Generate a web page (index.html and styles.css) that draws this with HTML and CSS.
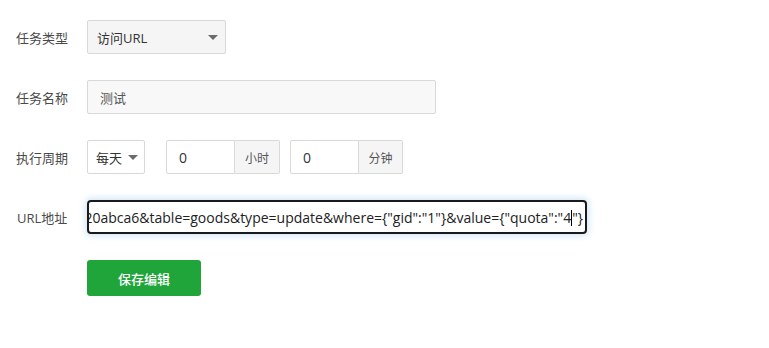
FILE: index.html
```html
<!DOCTYPE html>
<html lang="zh-CN">
<head>
<meta charset="utf-8">
<title>任务编辑</title>
<link rel="stylesheet" href="styles.css">
</head>
<body>
<form class="form">
  <div class="row">
    <label class="label">任务类型</label>
    <div class="select select-type"><span>访问URL</span><i class="caret"></i></div>
  </div>
  <div class="row">
    <label class="label">任务名称</label>
    <div class="input input-name">测试</div>
  </div>
  <div class="row">
    <label class="label">执行周期</label>
    <div class="select select-cycle"><span>每天</span><i class="caret"></i></div>
    <div class="group group-hour">
      <div class="input input-num">0</div>
      <div class="addon">小时</div>
    </div>
    <div class="group group-min">
      <div class="input input-num">0</div>
      <div class="addon">分钟</div>
    </div>
  </div>
  <div class="row">
    <label class="label label-url">URL地址</label>
    <div class="input input-url"><span class="url-text">20abca6&amp;table=goods&amp;type=update&amp;where={"gid":"1"}&amp;value={"quota":"4<span class="cursor"></span>"}</span></div>
  </div>
  <div class="row row-btn">
    <button type="button" class="btn">保存编辑</button>
  </div>
</form>
</body>
</html>
```
FILE: styles.css
```css
html, body {
  margin: 0;
  padding: 0;
  background: #ffffff;
}
body {
  font-family: "Open Sans", "Noto Sans CJK SC", sans-serif;
  font-size: 13px;
  color: #333333;
}
.form {
  padding: 20px 0 0 0;
}
.row {
  display: flex;
  align-items: center;
  height: 34px;
  margin-bottom: 26px;
}
.row-btn {
  height: 36px;
}
.label {
  width: 71px;
  padding-left: 16px;
  color: #4a4a4a;
  font-family: "Noto Sans CJK SC", sans-serif;
  font-size: 13px;
}
.label-url {
  padding-left: 17px;
  width: 70px;
  font-family: "Open Sans", "Noto Sans CJK SC", sans-serif;
}
.select {
  box-sizing: border-box;
  height: 34px;
  border: 1px solid #d9d9d9;
  border-radius: 2px;
  display: flex;
  align-items: center;
  justify-content: space-between;
  font-family: "Open Sans", "Noto Sans CJK SC", sans-serif;
  font-size: 13px;
  color: #333;
}
.select-type {
  width: 139px;
  background: #f5f5f5;
  padding: 0 6px 0 9px;
}
.select-cycle {
  width: 58px;
  background: #ffffff;
  padding: 0 5px 0 8px;
  margin-right: 21px;
}
.caret {
  width: 0;
  height: 0;
  border-left: 5px solid transparent;
  border-right: 5px solid transparent;
  border-top: 5px solid #6b6b6b;
  margin-right: 1px;
}
.input {
  box-sizing: border-box;
  height: 34px;
  border: 1px solid #d9d9d9;
  border-radius: 2px;
  display: flex;
  align-items: center;
  font-size: 13px;
  color: #333;
}
.input-name {
  width: 349px;
  background: #f8f8f8;
  padding-left: 12px;
  font-family: "Noto Sans CJK SC", sans-serif;
  color: #555;
}
.group {
  display: flex;
  margin-right: 10px;
}
.input-num {
  width: 69px;
  padding-left: 12px;
  border-radius: 2px 0 0 2px;
  font-size: 14px;
}
.addon {
  box-sizing: border-box;
  height: 34px;
  width: 45px;
  border: 1px solid #d9d9d9;
  border-left: none;
  border-radius: 0 2px 2px 0;
  background: #f5f5f5;
  display: flex;
  align-items: center;
  justify-content: center;
  font-family: "Noto Sans CJK SC", sans-serif;
  font-size: 12px;
  color: #555;
}
.group-min .addon {
  width: 44px;
}
.input-url {
  width: 500px;
  border: 2px solid #1a1a1a;
  border-radius: 4px;
  box-shadow: 0 0 6px 2px rgba(130, 185, 235, 0.35);
  overflow: hidden;
  justify-content: flex-end;
  padding: 0 2px 0 0;
  font-size: 14px;
  color: #222;
  white-space: nowrap;
}
.url-text {
  flex: none;
}
.cursor {
  display: inline-block;
  width: 1px;
  height: 16px;
  background: #000;
  vertical-align: -3px;
}
.btn {
  margin-left: 87px;
  width: 114px;
  height: 36px;
  border: none;
  border-radius: 3px;
  background: #20a53a;
  color: #ffffff;
  font-family: "Noto Sans CJK SC", sans-serif;
  font-size: 13px;
  font-weight: 500;
  cursor: pointer;
  padding: 0;
}
```
